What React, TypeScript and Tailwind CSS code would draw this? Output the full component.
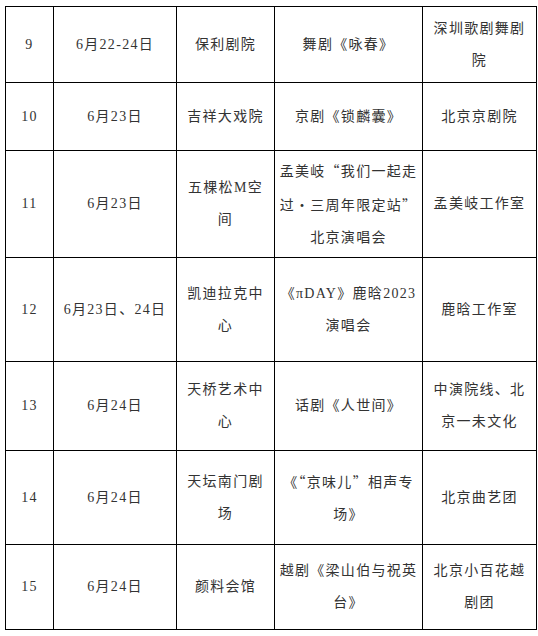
import React from "react";

type Row = {
  no: string;
  date: React.ReactNode;
  venue: React.ReactNode;
  show: React.ReactNode;
  org: React.ReactNode;
  h: string;
};

const Cj = ({ children }: { children: React.ReactNode }) => (
  <span className="font-['Noto_Sans_CJK_SC']">{children}</span>
);

const rows: Row[] = [
  {
    no: "9",
    date: "6月22-24日",
    venue: "保利剧院",
    show: "舞剧《咏春》",
    org: (
      <>
        深圳歌剧舞剧
        <br />院
      </>
    ),
    h: "h-[76px]",
  },
  {
    no: "10",
    date: "6月23日",
    venue: "吉祥大戏院",
    show: "京剧《锁麟囊》",
    org: "北京京剧院",
    h: "h-[68px]",
  },
  {
    no: "11",
    date: "6月23日",
    venue: (
      <>
        五棵松M空
        <br />间
      </>
    ),
    show: (
      <>
        孟美岐<Cj>“</Cj>我们一起走
        <br />过<Cj>·</Cj>三周年限定站<Cj>”</Cj>
        <br />北京演唱会
      </>
    ),
    org: "孟美岐工作室",
    h: "h-[107px]",
  },
  {
    no: "12",
    date: "6月23日、24日",
    venue: (
      <>
        凯迪拉克中
        <br />心
      </>
    ),
    show: (
      <>
        《πDAY》鹿晗2023
        <br />演唱会
      </>
    ),
    org: "鹿晗工作室",
    h: "h-[104px]",
  },
  {
    no: "13",
    date: "6月24日",
    venue: (
      <>
        天桥艺术中
        <br />心
      </>
    ),
    show: "话剧《人世间》",
    org: (
      <>
        中演院线、北
        <br />京一未文化
      </>
    ),
    h: "h-[89px]",
  },
  {
    no: "14",
    date: "6月24日",
    venue: (
      <>
        天坛南门剧
        <br />场
      </>
    ),
    show: (
      <>
        《<Cj>“</Cj>京味儿<Cj>”</Cj>相声专
        <br />场》
      </>
    ),
    org: "北京曲艺团",
    h: "h-[94px]",
  },
  {
    no: "15",
    date: "6月24日",
    venue: "颜料会馆",
    show: (
      <>
        越剧《梁山伯与祝英
        <br />台》
      </>
    ),
    org: (
      <>
        北京小百花越
        <br />剧团
      </>
    ),
    h: "h-[85px]",
  },
];

const cell = "border border-black text-center align-middle px-1";

export default function App() {
  return (
    <div className="w-[538px] h-[636px] bg-white pt-[6px] pl-[5px]">
      <table className="table-fixed border-collapse w-[531px] text-[14px] leading-[32px] tracking-[1.3px] text-[#333] font-['Liberation_Serif','Noto_Sans_CJK_SC',serif]">
        <colgroup>
          <col className="w-[48px]" />
          <col className="w-[123px]" />
          <col className="w-[98px]" />
          <col className="w-[148px]" />
          <col className="w-[114px]" />
        </colgroup>
        <tbody>
          {rows.map((r) => (
            <tr key={r.no}>
              <td className={`${cell} ${r.h}`}>{r.no}</td>
              <td className={cell}>{r.date}</td>
              <td className={cell}>{r.venue}</td>
              <td className={cell}>{r.show}</td>
              <td className={cell}>{r.org}</td>
            </tr>
          ))}
        </tbody>
      </table>
    </div>
  );
}
